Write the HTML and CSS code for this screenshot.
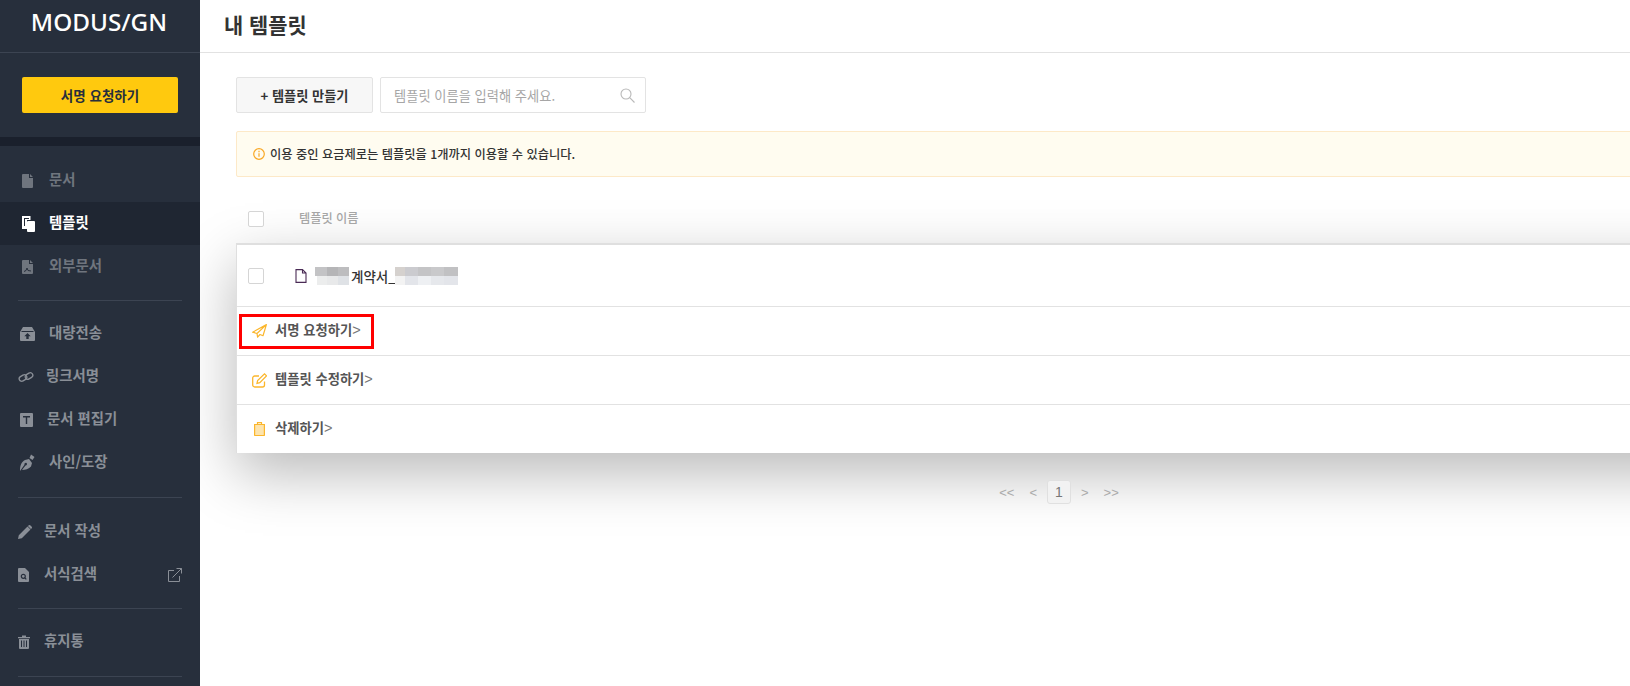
FILE: index.html
```html
<!DOCTYPE html>
<html lang="ko">
<head>
<meta charset="utf-8">
<title>내 템플릿</title>
<link rel="stylesheet" href="styles.css">
</head>
<body>
<div class="app">
  <aside class="sidebar">
    <div class="logo">MODUS/GN</div>
    <div class="cta-wrap"><button class="cta">서명 요청하기</button></div>
    <nav class="nav">
      <div class="group first">
        <a class="item g27"><svg width="11" height="14" viewBox="0 0 11 14"><path d="M1 0h6v4h4v9a1 1 0 0 1-1 1H1a1 1 0 0 1-1-1V1a1 1 0 0 1 1-1zM8 0l3 3H8z" fill="#6f757e"/></svg><span>문서</span></a>
        <a class="item active g23"><svg width="13" height="16" viewBox="0 0 13 16"><path d="M0 0h8.500v4H5v9H0z" fill="#fff"/><path d="M2 2h5v1H2zM2 3h1v7H2z" fill="#1f2632"/><rect x="5" y="5" width="8" height="11" rx="1" fill="#fff"/></svg><span>템플릿</span></a>
        <a class="item g27"><svg width="11" height="14" viewBox="0 0 11 14"><path d="M1 0h6v4h4v9a1 1 0 0 1-1 1H1a1 1 0 0 1-1-1V1a1 1 0 0 1 1-1zM8 0l3 3H8z" fill="#6f757e"/><path d="M2 11.500l2-1 1-2.500 1 2.500 3 .5" stroke="#272f3c" fill="none"/></svg><span>외부문서</span></a>
      </div>
      <div class="group">
        <a class="item i2 g14"><svg width="15" height="14" viewBox="0 0 15 14"><path d="M3 0h9l3 5v8a1 1 0 0 1-1 1H1a1 1 0 0 1-1-1V5z" fill="#8a8f97"/><path d="M1.500 4.500h12" stroke="#272f3c"/><path d="M7.500 6l3.200 3.200H8.700V12H6.300V9.200H4.300z" fill="#272f3c"/></svg><span>대량전송</span></a>
        <a class="item g12"><svg width="16" height="12" viewBox="0 0 16 12" fill="none" stroke="#8a8f97" stroke-width="1.300"><rect x="1" y="4.500" width="8" height="5" rx="2.500" transform="rotate(-32 5 7)"/><rect x="7" y="2.500" width="8" height="5" rx="2.500" transform="rotate(-32 11 5)"/></svg><span>링크서명</span></a>
        <a class="item i1 g14"><svg width="13" height="14" viewBox="0 0 13 14"><rect width="13" height="14" rx="1" fill="#8a8f97"/><path d="M3 3h7v1.500H7.200V11H5.800V4.500H3z" fill="#272f3c"/></svg><span>문서 편집기</span></a>
        <a class="item i1 g14"><svg width="15" height="17" viewBox="0 0 15 17"><path d="M0 17c0-6 1.500-9 5-11l4-1 3 4-1 3.500C9 15 5 16 2 16l3.500-4.500a1.300 1.300 0 1 0-1-.7z" fill="#8a8f97"/><path d="M9.500 4L11 .5l3.500 2.500-2 3z" fill="#8a8f97"/></svg><span>사인/도장</span></a>
      </div>
      <div class="group g3">
        <a class="item g12"><svg width="14" height="14" viewBox="0 0 14 14"><path d="M0 14l.8-3.800L9.500 1.500l3 3L3.800 13.200zM10.500.5a1.400 1.400 0 0 1 2 0l1 1a1.400 1.400 0 0 1 0 2l-.6.500-3-3z" fill="#8a8f97"/></svg><span>문서 작성</span></a>
        <a class="item g15 ext"><svg width="11" height="14" viewBox="0 0 11 14"><path d="M1 0h6l4 4v9a1 1 0 0 1-1 1H1a1 1 0 0 1-1-1V1a1 1 0 0 1 1-1z" fill="#8a8f97"/><circle cx="5.300" cy="8.300" r="2" fill="none" stroke="#272f3c" stroke-width="1.200"/><path d="M6.800 9.800l1.500 1.500" stroke="#272f3c" stroke-width="1.200"/></svg><span>서식검색</span><svg class="ext-icon" width="14" height="14" viewBox="0 0 14 14" fill="none" stroke="#8a8f97" stroke-width="1"><path d="M6 2.500H.5v11h11V8"/><path d="M4.500 9.500L13.500.5M8.500.5h5v5"/></svg></a>
      </div>
      <div class="group">
        <a class="item g14"><svg width="12" height="14" viewBox="0 0 12 14" fill="#8a8f97"><path d="M0 2h12v1.200H0zM4 .5h4V2H4z"/><path d="M1 4h10v9a1 1 0 0 1-1 1H2a1 1 0 0 1-1-1zm2 1.500V12h1V5.500zm2.500 0V12h1V5.500zm2.500 0V12h1V5.500z" fill-rule="evenodd"/></svg><span>휴지통</span></a>
      </div>
    </nav>
  </aside>

  <main class="main">
    <header class="topbar"><h1>내 템플릿</h1></header>
    <div class="content">
      <div class="toolbar">
        <button class="btn-new">+ 템플릿 만들기</button>
        <div class="search">
          <span class="placeholder">템플릿 이름을 입력해 주세요.</span>
          <svg width="15" height="15" viewBox="0 0 15 15" fill="none" stroke="#b9b9b9" stroke-width="1.100"><circle cx="6" cy="6" r="5"/><path d="M9.700 9.700L14.500 14.500"/></svg>
        </div>
      </div>
      <div class="alert">
        <svg width="12" height="12" viewBox="0 0 12 12" fill="none" stroke="#f9a825" stroke-width="1.200"><circle cx="6" cy="6" r="5.300"/><path d="M6 5.200v3.600M6 2.800v1.400"/></svg>
        <span>이용 중인 요금제로는 템플릿을 1개까지 이용할 수 있습니다.</span>
      </div>
      <div class="list-head">
        <span class="check"></span>
        <span class="head-label">템플릿 이름</span>
      </div>
      <section class="card">
        <div class="row-file">
          <span class="check"></span>
          <svg class="file-icon" width="12" height="14" viewBox="0 0 12 14" fill="none" stroke="#4a2b55" stroke-width="1.100"><path d="M1 .6h6.500L11 4v9.400H1zM7.500.6V4H11"/></svg>
          <svg class="blur-a" width="34" height="18" viewBox="0 0 34 18"><rect width="34" height="18" fill="#fff"/><rect y="0" width="12" height="9" fill="#c3c3c5"/><rect x="12" width="11" height="9" fill="#b5b5b7"/><rect x="23" width="11" height="9" fill="#bdbdbf"/><rect y="9" x="2" width="10" height="9" fill="#eceded"/><rect y="9" x="12" width="11" height="9" fill="#e8e9ea"/><rect y="9" x="23" width="11" height="9" fill="#dfe2e6"/></svg>
          <span class="file-name">계약서_</span>
          <svg width="63" height="18" viewBox="0 0 63 18"><rect width="10" height="9" fill="#d5d1ce"/><rect x="10" width="13" height="9" fill="#cbcbcf"/><rect x="23" width="13" height="9" fill="#c4c4c6"/><rect x="36" width="13" height="9" fill="#c9c9cb"/><rect x="49" width="14" height="9" fill="#c1c1c3"/><rect y="9" width="10" height="9" fill="#f3f3f3"/><rect x="10" y="9" width="13" height="9" fill="#e3e5ea"/><rect x="23" y="9" width="13" height="9" fill="#eef0f3"/><rect x="36" y="9" width="13" height="9" fill="#e6e8ec"/><rect x="49" y="9" width="14" height="9" fill="#e3e5ea"/></svg>
        </div>
        <div class="row-action sign">
          <svg width="15" height="14" viewBox="0 0 15 14" fill="none" stroke="#fbb62c" stroke-width="1.200" stroke-linejoin="round"><path d="M14.400.6L.6 8.200l4.400 1.300.6 3.700 2.400-2.700 3 1.200zM14.400.6L5 9.500"/></svg>
          <span class="txt">서명 요청하기<span class="chev">&gt;</span></span>
          <span class="highlight"></span>
        </div>
        <div class="row-action edit">
          <svg width="15" height="15" viewBox="0 0 15 15" fill="none" stroke="#fbb62c" stroke-width="1.300"><path d="M12.500 8.500V12a2 2 0 0 1-2 2H2.700a2 2 0 0 1-2-2V5a2 2 0 0 1 2-2H7"/><path d="M5 10.300l.6-2.800L12.500.9l2 2-6.700 6.800z"/></svg>
          <span class="txt">템플릿 수정하기<span class="chev">&gt;</span></span>
        </div>
        <div class="row-action del">
          <svg width="11" height="14" viewBox="0 0 11 14"><path d="M.6 2.500h9.800V13a.5.5 0 0 1-.5.5H1.100a.5.5 0 0 1-.5-.5z" fill="#fde4ad" stroke="#fbb62c" stroke-width="1.200"/><path d="M3.500 2.500V.7h4v1.800" fill="none" stroke="#fbb62c" stroke-width="1.200"/></svg>
          <span class="txt">삭제하기<span class="chev">&gt;</span></span>
        </div>
      </section>
      <div class="pager">
        <span class="outer-l">&lt;&lt;</span><span>&lt;</span><span class="page">1</span><span>&gt;</span><span class="outer-r">&gt;&gt;</span>
      </div>
    </div>
  </main>
</div>
</body>
</html>
```

FILE: styles.css
```css
* { box-sizing: border-box; }
html, body { margin: 0; height: 100%; overflow: hidden; background: #fff; }
body { font-family: "Noto Sans CJK KR", "Noto Sans", sans-serif; color: #333; }
button { font-family: inherit; cursor: pointer; }
.app { display: flex; height: 686px; width: 100%; overflow: hidden; }

/* sidebar */
.sidebar { flex: 0 0 200px; background: #272f3c; position: relative; z-index: 2; }
.logo { height: 53px; border-bottom: 1px solid #3c4452; color: #fff; font: 500 24.3px/44px "Noto Sans", sans-serif; text-align: center; padding-right: 2px; }
.cta-wrap { height: 93px; padding: 24px 22px; border-bottom: 9px solid #1a202c; }
.cta { display: block; width: 156px; height: 36px; border: 0; border-radius: 2px; background: #ffc90e; color: #272f3c; font-size: 13.5px; font-weight: 700; padding: 0; }
.nav { padding: 13px 18px 0; }
.group { border-bottom: 1px solid #3c4452; padding: 11px 0 13px; }
.group.first { padding: 0 0 12px; }
.group.g3 { padding: 12px 0; }
.item { display: flex; align-items: center; height: 43px; color: #8a8f97; font-size: 14.4px; font-weight: 700; }
.item span { margin-bottom: 4px; }
.first .item { padding-left: 4px; color: #6f757e; }
.item.active { background: #1f2632; color: #fff; margin: 0 -18px; padding-left: 22px; }
.i1, .i2 { padding-left: 2px; }
.g27 { gap: 16px; }
.g23 { gap: 14px; }
.g15 { gap: 15px; }
.g14 { gap: 14px; }
.g12 { gap: 12px; }
.ext-icon { margin-left: auto; }

/* main */
.main { flex: 1 1 auto; min-width: 0; }
.topbar { height: 53px; border-bottom: 1px solid #e2e2e2; padding-left: 24px; }
.topbar h1 { margin: 0; font-size: 20.9px; line-height: 48px; font-weight: 700; color: #333; }
.content { width: 1646px; margin-left: 36px; padding-top: 24px; }
.toolbar { display: flex; gap: 7px; }
.btn-new { width: 137px; height: 36px; background: #f7f7f7; border: 1px solid #e3e3e3; border-radius: 2px; color: #333; font-size: 13.2px; font-weight: 700; padding: 0; }
.search { width: 266px; height: 36px; border: 1px solid #e3e3e3; border-radius: 2px; display: flex; align-items: center; justify-content: space-between; padding: 0 10px 0 13px; }
.placeholder { font-size: 13.25px; color: #a6a6a6; }
.alert { margin-top: 18px; height: 46px; background: #fffcf0; border: 1px solid #fde9c8; border-radius: 2px; display: flex; align-items: center; gap: 5px; padding-left: 16px; font-size: 12.25px; font-weight: 500; color: #333; }
.list-head { height: 66px; display: flex; align-items: center; padding: 18px 0 0 12px; }
.check { flex: none; width: 16px; height: 16px; background: #fff; border: 1px solid #d5d5d5; border-radius: 2px; }
.head-label { margin-left: 35px; margin-top: -2px; font-size: 12.2px; color: #a6a6a6; font-weight: 500; }
.card { background: #fff; border-top: 2px solid #dfdfdf; border-left: 1px solid #dfdfdf; box-shadow: 0 20px 55px rgba(0, 0, 0, .28); }
.row-file { height: 62px; display: flex; align-items: center; padding-left: 11px; border-bottom: 1px solid #e2e2e2; }
.file-icon { flex: none; margin-left: 31px; margin-right: 8px; }
.blur-a { flex: none; margin-right: 2px; }
.file-name { flex: none; width: 44px; white-space: nowrap; font-size: 13.5px; color: #333; font-weight: 500; }
.row-action { height: 49px; display: flex; align-items: center; padding-left: 15px; gap: 8px; border-bottom: 1px solid #e2e2e2; font-size: 13.3px; font-weight: 700; color: #555; position: relative; }
.row-action .txt { margin-bottom: 4px; }
.row-action.del { border-bottom: 0; height: 48px; gap: 10px; padding-left: 17px; }
.chev { font-family: "Liberation Sans", sans-serif; font-weight: 400; color: #777; font-size: 14.5px; }
.highlight { position: absolute; left: 2px; top: 7px; width: 135px; height: 35px; border: 3px solid #f00; }
.pager { height: 24px; margin-top: 27px; display: flex; align-items: center; justify-content: center; gap: 10px; font: 13px "Liberation Sans", sans-serif; color: #aaa; }
.outer-l { margin-right: 5px; }
.outer-r { margin-left: 5px; }
.page { width: 24px; height: 24px; line-height: 23px; text-align: center; background: #f2f2f2; border: 1px solid #e0e0e0; border-radius: 3px; color: #777; font-size: 14px; }
```
